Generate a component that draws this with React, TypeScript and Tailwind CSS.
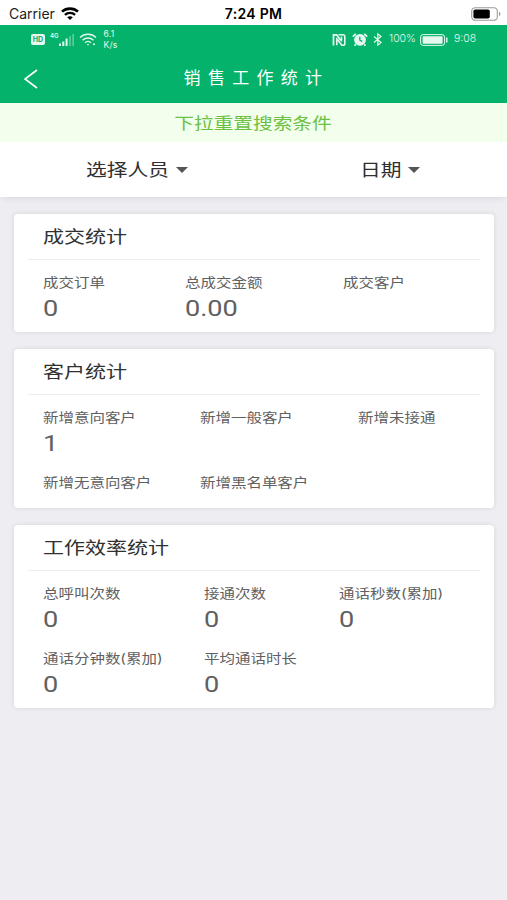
import clsx from "clsx";

type Stat = { label: string; value?: string };

type StatGroup = {
  title: string;
  columns: string;
  bottom: string;
  rows: Stat[][];
};

const groups: StatGroup[] = [
  {
    title: "成交统计",
    columns: "grid-cols-[142px_158px_1fr]",
    bottom: "pb-[10px]",
    rows: [
      [
        { label: "成交订单", value: "0" },
        { label: "总成交金额", value: "0.00" },
        { label: "成交客户" },
      ],
    ],
  },
  {
    title: "客户统计",
    columns: "grid-cols-[157px_158px_1fr]",
    bottom: "pb-[16px]",
    rows: [
      [
        { label: "新增意向客户", value: "1" },
        { label: "新增一般客户" },
        { label: "新增未接通" },
      ],
      [{ label: "新增无意向客户" }, { label: "新增黑名单客户" }],
    ],
  },
  {
    title: "工作效率统计",
    columns: "grid-cols-[161px_135px_1fr]",
    bottom: "pb-[10px]",
    rows: [
      [
        { label: "总呼叫次数", value: "0" },
        { label: "接通次数", value: "0" },
        { label: "通话秒数(累加)", value: "0" },
      ],
      [
        { label: "通话分钟数(累加)", value: "0" },
        { label: "平均通话时长", value: "0" },
      ],
    ],
  },
];

function WifiIcon({ className }: { className?: string }) {
  return (
    <svg viewBox="0 0 18 13" className={className} fill="none" stroke="currentColor">
      <path d="M1 4.6C5.4.6 12.6.6 17 4.6" strokeWidth="2.6" />
      <path d="M3.9 7.8c2.9-2.5 7.3-2.5 10.2 0" strokeWidth="2.3" />
      <path d="M9 13 6.200 10.300c1.600-1.400 4-1.400 5.600 0z" fill="currentColor" stroke="none" />
    </svg>
  );
}

function SystemBar() {
  return (
    <div className="grid h-[25px] grid-cols-3 items-center bg-white pt-0.5 text-black">
      <div className="flex items-center gap-1.5 pl-[9px]">
        <span className="text-[14px] leading-none text-[#222]">Carrier</span>
        <WifiIcon className="h-[13px] w-[18px]" />
      </div>
      <span className="text-center text-[14px] leading-none font-semibold tracking-[0.3px]">7:24 PM</span>
      <div className="flex justify-end pr-[6px]">
        <svg viewBox="0 0 30 14" className="h-[14px] w-[30px]" fill="none">
          <rect x="0.7" y="0.7" width="25.6" height="12.6" rx="3.6" stroke="#9b9b9b" strokeWidth="1.1" />
          <rect x="2.4" y="2.4" width="16.4" height="9.2" rx="1.8" fill="#000" />
          <path d="M28 4.8c2 .8 2 3.6 0 4.4z" fill="#9b9b9b" />
        </svg>
      </div>
    </div>
  );
}

function PhoneBar() {
  return (
    <div className="flex h-[29px] items-center justify-between px-[31px] text-white/90">
      <div className="flex items-center">
        <span className="flex h-[11px] w-[14px] items-center justify-center rounded-[2px] bg-white/90 text-[7px] leading-none font-bold text-[#04b26b]">
          HD
        </span>
        <span className="mb-[7px] ml-[5px] text-[6px] leading-none font-semibold">4G</span>
        <svg viewBox="0 0 16 12" className="h-[12px] w-[16px]" fill="currentColor">
          <path d="M0 9.5h2V12H0zM3.3 7.5h2V12h-2zM6.6 4.5h2V12h-2z" />
          <path d="M10.2 2h1.6v10h-1.6zM13.4 0H15v12h-1.6z" opacity="0.4" />
        </svg>
        <svg viewBox="0 0 18 13" className="ml-[4px] h-[13px] w-[18px]" fill="none" stroke="currentColor" strokeWidth="1.4">
          <path d="M1 4.5C5.500.2 12.500.2 17 4.500" />
          <path d="M3.500 7.200c3.200-2.900 7.800-2.900 11 0" />
          <path d="M6 9.700c1.800-1.600 4.200-1.600 6 0" />
          <path d="M7.700 11 9 12.500 10.300 11zM14 10.500h2v1.500h-2z" fill="currentColor" stroke="none" />
        </svg>
        <span className="ml-[7px] flex flex-col text-[8.500px] leading-[10.500px] tracking-[0.3px]">
          <span>6.1</span>
          <span>K/s</span>
        </span>
      </div>
      <div className="flex items-center">
        <svg viewBox="0 0 14 12" className="h-[12px] w-[14px]" fill="none" stroke="currentColor">
          <path d="M1.500 11.500V.8h3l4.500 5.700" strokeWidth="1.800" />
          <path d="M4.800 3.800v7.400" strokeWidth="1.600" />
          <path d="M5.500 5.500 9.800 11.200h1.200q1.800 0 1.800-1.800V2.600Q12.800.8 11 .8H6.500" strokeWidth="1.600" />
          <path d="M9.500 2.500v5" strokeWidth="1.500" />
        </svg>
        <svg viewBox="0 0 16 13" className="ml-[6px] h-[13px] w-[16px]" fill="none">
          <circle cx="8" cy="6.800" r="5.900" fill="currentColor" />
          <path d="M.8 3.600 3.800.8M15.200 3.600 12.200.8M3.800 11.400l-1.200 1.300M12.200 11.400l1.200 1.300" stroke="currentColor" strokeWidth="1.800" />
          <path d="M7.800 3.800V7l2.400 1.600" stroke="#04b26b" strokeWidth="1.300" />
        </svg>
        <svg viewBox="0 0 10 13" className="ml-[5px] h-[13px] w-[10px]" fill="none" stroke="currentColor" strokeWidth="1.200">
          <path d="m1 3.500 7 6-3.200 2.700V.8L8 3.500l-7 6" />
        </svg>
        <span className="ml-[6px] w-[28px] text-[10.500px] leading-none font-light">100%</span>
        <svg viewBox="0 0 28 12" className="ml-[3px] h-[12px] w-[28px]" fill="none">
          <rect x="0.600" y="0.600" width="24" height="10.800" rx="2.500" stroke="currentColor" />
          <rect x="2.600" y="2.300" width="20" height="7.400" rx="1" fill="currentColor" />
          <path d="M26.800 3.500v5" stroke="currentColor" strokeWidth="1.400" />
        </svg>
        <span className="ml-[6px] w-[22px] text-[10.500px] leading-none font-light">9:08</span>
      </div>
    </div>
  );
}

function Filter({ label, className }: { label: string; className?: string }) {
  return (
    <button type="button" className={clsx("flex items-center", className)}>
      <span className="origin-left scale-x-[1.22] pt-0.5 text-[17px] leading-none whitespace-nowrap text-[#303030]">{label}</span>
      <svg viewBox="0 0 12 6" className="h-[6px] w-[12px]">
        <path d="M0 0h12L6 6z" fill="#555" />
      </svg>
    </button>
  );
}

function StatCard({ group }: { group: StatGroup }) {
  return (
    <section className={clsx("rounded-[4px] bg-white shadow-[0_0_5px_rgba(0,0,0,0.1)]", group.bottom)}>
      <div className="mx-[14px] flex h-[46px] items-center border-b border-[#ededed] pl-[15px]">
        <h2 className="origin-left scale-x-[1.2] text-[17.500px] leading-none text-[#303030]">{group.title}</h2>
      </div>
      <div className="flex flex-col gap-[15px] pt-[12px] pl-[29px]">
        {group.rows.map((row, i) => (
          <div key={i} className={clsx("grid items-start", group.columns)}>
            {row.map((stat) => (
              <div key={stat.label} className="flex flex-col gap-1">
                <span className="w-max origin-left scale-x-[1.190] text-[13px] leading-[20px] text-[#606060]">{stat.label}</span>
                {stat.value && (
                  <span className="w-max origin-left scale-x-[1.230] font-[Roboto] text-[22px] leading-[26px] text-[#606060]">
                    {stat.value}
                  </span>
                )}
              </div>
            ))}
          </div>
        ))}
      </div>
    </section>
  );
}

export default function App() {
  return (
    <div className="min-h-screen bg-[#eeeef2] font-['Inter','Noto_Sans_CJK_SC',sans-serif]">
      <SystemBar />

      {/* Header */}
      <header className="h-[78px] bg-[#04b26b]">
        <PhoneBar />
        <div className="grid h-[49px] grid-cols-[60px_1fr_60px] items-center">
          <svg viewBox="0 0 14 20" className="ml-[24px] h-[20px] w-[14px]" fill="none" stroke="#fff" strokeWidth="1.600">
            <path d="M13 1 1 10l12 9" />
          </svg>
          <h1 className="pl-[6px] text-center text-[17px] leading-none tracking-[7.300px] text-white">销售工作统计</h1>
        </div>
      </header>

      {/* Pull-down hint */}
      <div className="flex h-[39px] items-center justify-center bg-[#f1ffec]">
        <span className="scale-x-[1.230] text-[16px] leading-none text-[#6cc142]">下拉重置搜索条件</span>
      </div>

      {/* Filters */}
      <div className="flex h-[55px] items-center bg-white shadow-[0_5px_6px_-3px_rgba(0,0,0,0.08)]">
        <Filter label="选择人员" className="ml-[86px] w-[102px] justify-between" />
        <Filter label="日期" className="ml-[172px] w-[60px] justify-between" />
      </div>

      <main className="flex flex-col gap-[17px] px-[14px] pt-[17px] pr-[13px]">
        {groups.map((group) => (
          <StatCard key={group.title} group={group} />
        ))}
      </main>
    </div>
  );
}
